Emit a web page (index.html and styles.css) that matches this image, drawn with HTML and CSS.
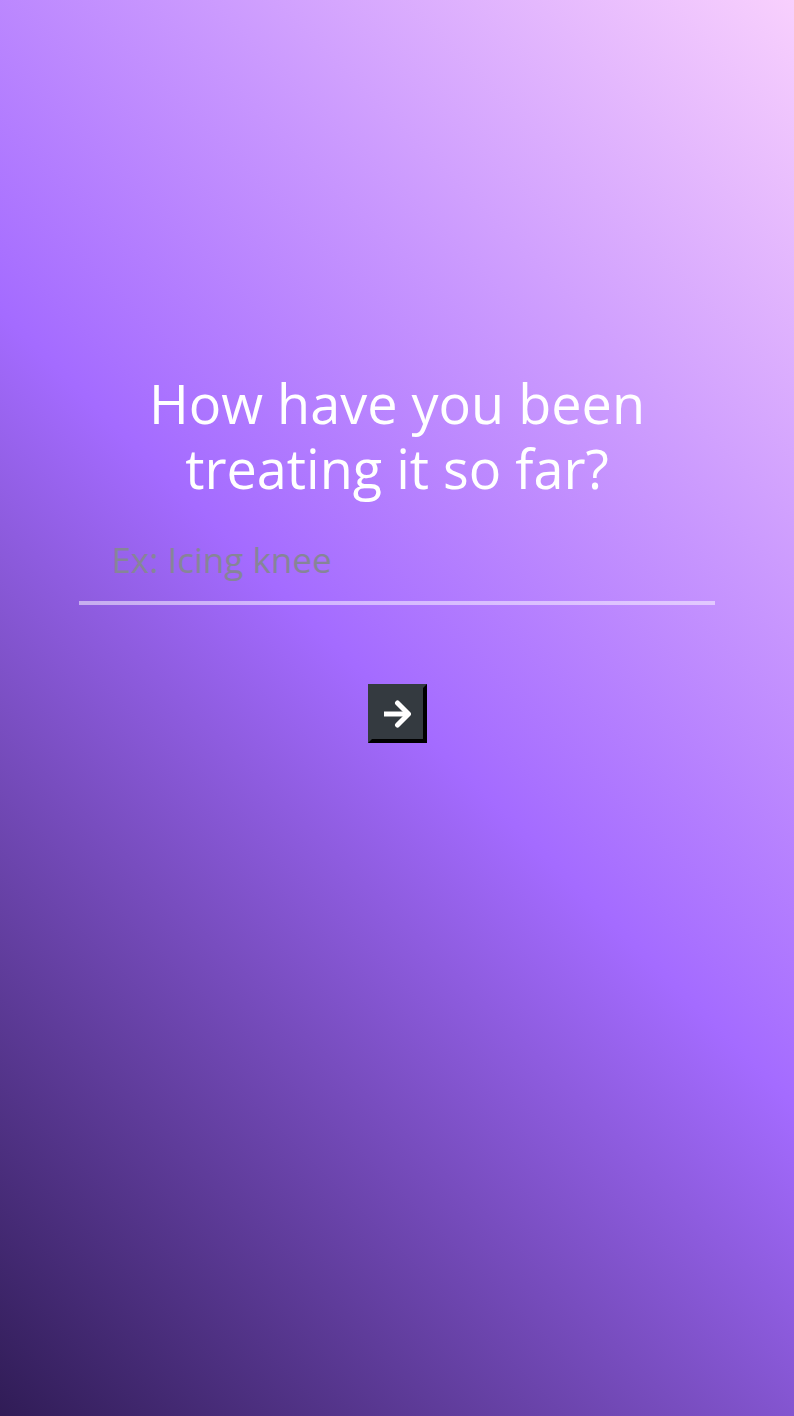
FILE: index.html
```html
<!DOCTYPE html>
<html lang="en">
<head>
<meta charset="utf-8">
<meta name="viewport" content="width=device-width, initial-scale=1">
<title>Treatment</title>
<link rel="stylesheet" href="styles.css">
</head>
<body class="page">
<form class="question">
  <h1 class="title"><label for="treatment">How have you been treating it so far?</label></h1>
  <input class="answer" id="treatment" name="treatment" type="text" placeholder="Ex: Icing knee">
  <button class="next" type="submit" aria-label="Next">
    <svg class="arrow" viewBox="0 0 28 28" aria-hidden="true"><path class="shaft" d="M1 14H24"/><path d="M14.500 3 25.500 14 14.500 25"/></svg>
  </button>
</form>
</body>
</html>
```
FILE: styles.css
```css
* {
  box-sizing: border-box;
}

.page {
  min-height: 100vh;
  margin: 0;
  padding: 0 10% 302px;
  display: flex;
  flex-direction: column;
  justify-content: center;
  background: linear-gradient(45deg, #301c56, #a46bff 50%, #f8d0fd);
  font-family: "Open Sans", sans-serif;
}

.question {
  display: flex;
  flex-direction: column;
  align-items: center;
}

.title {
  margin: 0 0 16px;
  padding: 0 48px;
  color: #fff;
  font-size: 54px;
  font-weight: 400;
  line-height: 65px;
  text-align: center;
}

.answer {
  width: 100%;
  height: 88px;
  padding: 0 32px;
  border: 0;
  border-bottom: 4px solid rgba(255, 255, 255, 0.5);
  background: transparent;
  color: #fff;
  font: inherit;
  font-size: 35px;
  outline: 0;
}

.answer::placeholder {
  color: #868598;
  opacity: 1;
}

.next {
  width: 59px;
  height: 59px;
  margin-top: 79px;
  padding: 0;
  display: flex;
  align-items: center;
  justify-content: center;
  border: 4px solid;
  border-color: #343a40 #000 #000 #343a40;
  background: #343a40;
  color: #fff;
}

.arrow {
  width: 28px;
  height: 28px;
  fill: none;
  stroke: currentColor;
  stroke-width: 5;
  stroke-linecap: round;
  stroke-linejoin: round;
}

.shaft {
  stroke-linecap: butt;
}
```
